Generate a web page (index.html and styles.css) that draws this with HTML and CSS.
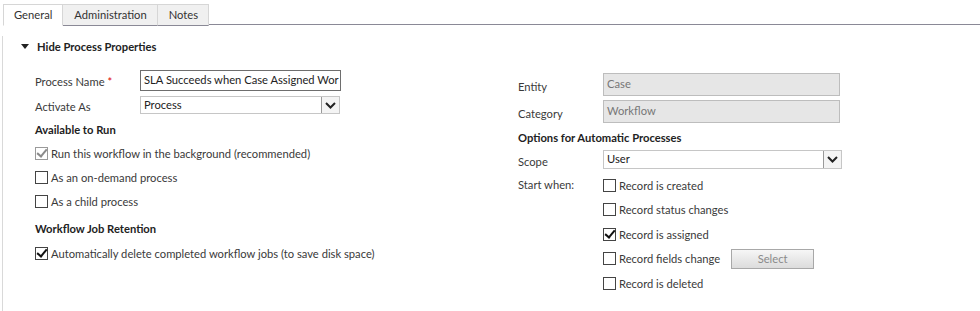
FILE: index.html
```html
<!DOCTYPE html>
<html lang="en">
<head>
    <meta charset="UTF-8">
    <title>Process Properties</title>
    <link rel="stylesheet" href="styles.css">
</head>
<body>
    <div class="page">
        <!-- Tabs -->
        <div class="tabs">
            <div class="tab active">General</div>
            <div class="tab">Administration</div>
            <div class="tab">Notes</div>
            <div class="tab-fill"></div>
        </div>

        <div class="panel">
            <div class="section-title">
                <span class="arrow"></span>Hide Process Properties
            </div>

            <div class="columns">
                <!-- Left column -->
                <div class="col-left">
                    <div class="row r-name">
                        <label class="lbl">Process Name <span class="req">*</span></label>
                        <div class="textbox">SLA Succeeds when Case Assigned Wor</div>
                    </div>
                    <div class="row r-activate">
                        <label class="lbl">Activate As</label>
                        <div class="select">
                            <span>Process</span>
                            <span class="select-btn"><svg width="11" height="7" viewBox="0 0 11 7"><path d="M1 1 L5.5 5.5 L10 1" fill="none" stroke="#222" stroke-width="2"/></svg></span>
                        </div>
                    </div>
                    <div class="row r-heading">
                        <h3>Available to Run</h3>
                    </div>
                    <div class="row r-check">
                        <span class="cb checked disabled"></span>Run this workflow in the background (recommended)
                    </div>
                    <div class="row r-check">
                        <span class="cb"></span>As an on-demand process
                    </div>
                    <div class="row r-check">
                        <span class="cb"></span>As a child process
                    </div>
                    <div class="row r-heading2">
                        <h3>Workflow Job Retention</h3>
                    </div>
                    <div class="row r-check">
                        <span class="cb checked"></span>Automatically delete completed workflow jobs (to save disk space)
                    </div>
                </div>

                <!-- Right column -->
                <div class="col-right">
                    <div class="row r-entity">
                        <label class="lbl">Entity</label>
                        <div class="textbox readonly">Case</div>
                    </div>
                    <div class="row r-category">
                        <label class="lbl">Category</label>
                        <div class="textbox readonly">Workflow</div>
                    </div>
                    <div class="row r-options">
                        <h3>Options for Automatic Processes</h3>
                    </div>
                    <div class="row r-scope">
                        <label class="lbl">Scope</label>
                        <div class="select wide">
                            <span>User</span>
                            <span class="select-btn"><svg width="11" height="7" viewBox="0 0 11 7"><path d="M1 1 L5.5 5.5 L10 1" fill="none" stroke="#222" stroke-width="2"/></svg></span>
                        </div>
                    </div>
                    <div class="start-when">
                        <label class="lbl">Start when:</label>
                        <div class="start-list">
                            <div class="row r-start"><span class="cb"></span>Record is created</div>
                            <div class="row r-start"><span class="cb"></span>Record status changes</div>
                            <div class="row r-start"><span class="cb checked"></span>Record is assigned</div>
                            <div class="row r-start"><span class="cb"></span>Record fields change<button class="btn">Select</button></div>
                            <div class="row r-start"><span class="cb"></span>Record is deleted</div>
                        </div>
                    </div>
                </div>
            </div>
        </div>
    </div>
</body>
</html>
```

FILE: styles.css
```css
/* Base */
body {
    margin: 0;
    padding: 0;
    background-color: #ffffff;
    font-family: "Segoe UI", Lato, sans-serif;
    font-size: 11.2px;
    color: #3a3a3a;
}

.page {
    padding-left: 3px;
    height: 311px;
}

/* Tabs */
.tabs {
    display: flex;
    height: 25px;
    padding-top: 4px;
    box-sizing: border-box;
}

.tab {
    height: 20px;
    line-height: 19px;
    padding: 0 10px 0 11px;
    border: 1px solid #d6d6d6;
    border-bottom: 1px solid #8a8996;
    border-left: none;
    background-color: #f0f0f0;
    color: #333;
}

.tab:first-child {
    border-left: 1px solid #d6d6d6;
}

.tab.active {
    background-color: #fff;
    border-bottom-color: #fff;
    padding: 0 10px;
}

.tab-fill {
    flex: 1;
    border-bottom: 1px solid #8a8996;
}

/* Panel */
.panel {
    border-left: 1px solid #d9d9d9;
    height: 286px;
    margin-left: -1px;
}

.section-title {
    display: flex;
    align-items: center;
    height: 20px;
    margin-top: 11px;
    padding-left: 18px;
    font-weight: bold;
    color: #222;
}

.arrow {
    width: 0;
    height: 0;
    border-left: 4px solid transparent;
    border-right: 4px solid transparent;
    border-top: 5px solid #222;
    margin-right: 8px;
}

.columns {
    display: flex;
}

h3 {
    margin: 0;
    font-size: 11.2px;
    font-weight: bold;
    color: #222;
}

.row {
    display: flex;
    align-items: center;
}

.lbl {
    padding-top: 4px;
    color: #3a3a3a;
}

.req {
    color: #d00;
}

/* Left column */
.col-left {
    width: 483px;
    padding-left: 32px;
    padding-top: 12px;
}

.col-left .lbl {
    width: 105px;
    padding-top: 2px;
}

.r-name { height: 24px; }
.r-activate { height: 26px; }
.r-heading { height: 23px; }
.r-check { height: 24px; }
.r-heading2 { height: 28px; padding-top: 2px; box-sizing: border-box; }

/* Right column */
.col-right {
    padding-top: 15px;
}

.col-right .lbl {
    width: 85px;
}

.r-entity { height: 26px; }
.r-category { height: 28px; }
.r-options { height: 24px; }
.r-scope { height: 21px; }

.start-when {
    display: flex;
    margin-top: 3px;
}

.start-when .lbl {
    padding-top: 5px;
}

.r-start {
    height: 24.5px;
}

/* Inputs */
.textbox {
    width: 194px;
    height: 19px;
    line-height: 17px;
    border: 1px solid #6e6e6e;
    padding: 0 2px 0 3px;
    white-space: nowrap;
    overflow: hidden;
    color: #222;
}

.textbox.readonly {
    width: 230px;
    height: 21px;
    line-height: 19px;
    border-color: #bdbdbd;
    background-color: #e6e6e6;
    color: #777;
}

.select {
    display: flex;
    justify-content: space-between;
    width: 200px;
    height: 18px;
    border: 1px solid #c6c6c6;
    line-height: 16px;
    padding-left: 3px;
    box-sizing: border-box;
    color: #222;
}

.select.wide {
    width: 239px;
    height: 19px;
}

.select-btn {
    display: flex;
    align-items: center;
    justify-content: center;
    width: 17px;
    border-left: 1px solid #999;
    background-color: #f4f4f4;
}

/* Checkboxes */
.cb {
    position: relative;
    width: 11px;
    height: 11px;
    border: 1px solid #444;
    background-color: #fff;
    margin-right: 3px;
    flex-shrink: 0;
}

.cb.checked::after {
    content: "";
    position: absolute;
    left: 3px;
    top: -1px;
    width: 4px;
    height: 8px;
    border: solid #111;
    border-width: 0 2px 2px 0;
    transform: rotate(40deg);
}

.cb.disabled {
    border-color: #9a9a9a;
}

.cb.disabled::after {
    border-color: #8a8a8a;
}

/* Button */
.btn {
    width: 83px;
    height: 20px;
    margin-left: 11px;
    border: 1px solid #a8a8a8;
    background: linear-gradient(#f6f6f6, #dcdcdc);
    font-family: "Segoe UI", Lato, sans-serif;
    font-size: 11.2px;
    color: #8a8a8a;
    padding: 0;
}
```
